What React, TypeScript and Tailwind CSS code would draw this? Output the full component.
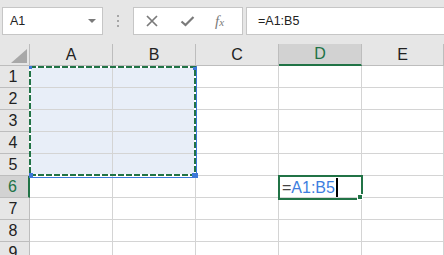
import React from "react"

const cols = ["A", "B", "C", "D", "E"]
const rows = [1, 2, 3, 4, 5, 6, 7, 8, 9]

// celdas del rango referenciado A1:B5
const inRange = (r: number, c: number) => r <= 5 && c <= 1

const App = () => {
  return (
    <div className="relative w-[444px] h-[255px] overflow-hidden bg-white font-['Liberation_Sans',Arial,sans-serif]">
      {/* barra de fórmulas */}
      <div className="flex items-start h-[44px] bg-[#e6e6e6] pt-[7px]">
        <div className="ml-[2px] w-[101px] h-[28px] bg-white border border-[#c6c6c6] flex items-center pl-[7px] pr-[6px]">
          <span className="text-[12.5px] text-[#222]">A1</span>
          <svg width="8" height="4" viewBox="0 0 8 4" className="ml-auto">
            <path d="M0 0 H8 L4 4 Z" fill="#7a7a7a" />
          </svg>
        </div>
        <div className="w-[30px] h-[28px] flex flex-col items-center justify-center gap-[3px]">
          <span className="w-[2px] h-[2px] bg-[#a6a6a6]" />
          <span className="w-[2px] h-[2px] bg-[#a6a6a6]" />
          <span className="w-[2px] h-[2px] bg-[#a6a6a6]" />
        </div>
        <div className="w-[110px] h-[28px] bg-white border border-[#c6c6c6] flex items-center">
          <svg width="14" height="14" viewBox="0 0 14 14" className="ml-[11px]">
            <path d="M2 2 L12 12 M12 2 L2 12" stroke="#7a7a7a" strokeWidth="1.7" fill="none" />
          </svg>
          <svg width="15" height="12" viewBox="0 0 15 12" className="ml-[21px]">
            <path d="M1.5 6.5 L5.5 10 L13.5 2" stroke="#7a7a7a" strokeWidth="2.2" fill="none" />
          </svg>
          <span className="ml-[20px] text-[15px] italic text-[#7a7a7a] font-['Liberation_Serif',serif] leading-none">
            f<span className="text-[11px]">x</span>
          </span>
        </div>
        <div className="ml-[3px] flex-1 h-[28px] bg-white border border-[#c6c6c6] border-r-0 flex items-center pl-[11px]">
          <span className="text-[12.5px] text-[#222]">=A1:B5</span>
        </div>
      </div>

      {/* hoja */}
      <div className="grid grid-cols-[30px_83px_83px_83px_83px_1fr] auto-rows-[22px]">
        <div className="bg-[#e6e6e6] border-r border-b border-[#bdbdbd] pl-[11px] pt-[5px]">
          <div className="w-[16px] h-[14px] bg-[#a8a8a8] [clip-path:polygon(100%_0,100%_100%,0_100%)]" />
        </div>
        {cols.map((c) => (
          <div
            key={c}
            className={
              c === "D"
                ? "flex items-center justify-center bg-[#d2d2d2] border-r border-[#bdbdbd] border-b-2 border-b-[#217346] text-[16px] text-[#217346]"
                : "flex items-center justify-center bg-[#e6e6e6] border-r border-b border-[#bdbdbd] text-[16px] text-[#222]"
            }
          >
            {c}
          </div>
        ))}
        {rows.map((r) => (
          <React.Fragment key={r}>
            <div
              className={
                r === 6
                  ? "flex items-center justify-center pr-[3px] bg-[#d2d2d2] border-r-2 border-r-[#217346] border-b border-[#bdbdbd] text-[16px] text-[#217346]"
                  : "flex items-center justify-center pr-[3px] bg-[#e6e6e6] border-r border-b border-[#bdbdbd] text-[16px] text-[#222]"
              }
            >
              {r}
            </div>
            {cols.map((c, ci) => (
              <div
                key={c}
                className={
                  inRange(r, ci)
                    ? "bg-[#e8eef8] border-r border-b border-[#d4d4d4]"
                    : "border-r border-b border-[#d4d4d4]"
                }
              />
            ))}
          </React.Fragment>
        ))}
      </div>

      <svg className="absolute left-[29px] top-[66px]" width="169" height="112" viewBox="0 0 169 112">
        <rect x="1" y="1" width="165" height="108" fill="none" stroke="#ffffff" strokeWidth="2" />
        <rect x="1" y="1" width="165" height="108" fill="none" stroke="#217346" strokeWidth="2" strokeDasharray="6 2" />
        <path d="M167.5 0 V111.5 H0" fill="none" stroke="#3c78d8" strokeWidth="1" />
        <rect x="0" y="0" width="3" height="3" fill="#3c78d8" />
        <rect x="164" y="1" width="4" height="3" fill="#3c78d8" />
        <rect x="0" y="107" width="4" height="5" fill="#3c78d8" />
        <rect x="163" y="107" width="6" height="5" fill="#3c78d8" />
      </svg>

      {/* celda activa D6 en edición */}
      <div className="absolute left-[278px] top-[175px] w-[85px] h-[25px] border-2 border-[#217346] flex items-center pl-[2px]">
        <span className="text-[16px] text-[#444]">=</span>
        <span className="text-[16px] text-[#3d7ee0]">A1:B5</span>
        <span className="ml-[1px] w-[2px] h-[19px] bg-black" />
      </div>
      <span className="absolute left-[357px] top-[194px] w-[6px] h-[6px] bg-[#217346] border border-white" />
    </div>
  )
}

export default App
